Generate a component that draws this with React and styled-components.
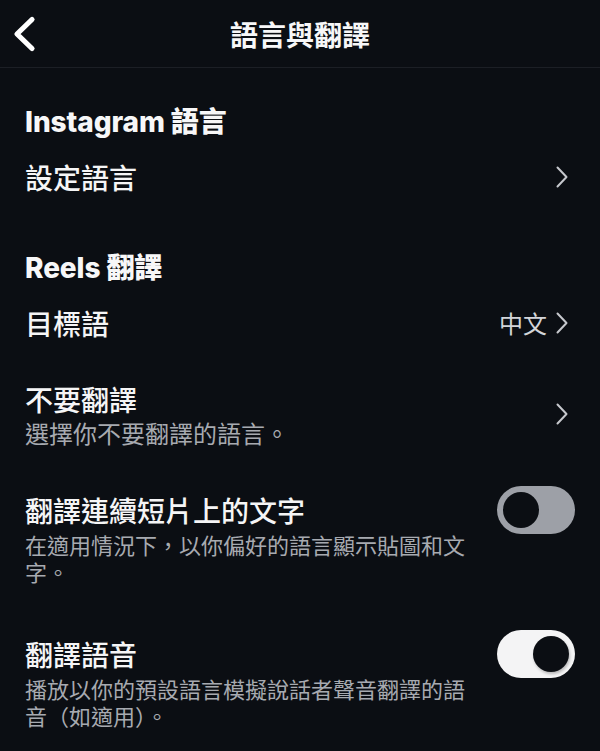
import React from "react";
import styled, { createGlobalStyle } from "styled-components";

const BG = "#0b0e13";

const Global = createGlobalStyle`
  html, body { margin: 0; padding: 0; background: ${BG}; }
  body { font-family: "Inter", "Noto Sans CJK TC", sans-serif; color: #f5f5f6; }
  * { box-sizing: border-box; }
`;

const Page = styled.div`
  width: 600px;
  min-height: 751px;
  background: ${BG};
  overflow: hidden;
`;

const Header = styled.header`
  height: 68px;
  display: grid;
  grid-template-columns: 1fr auto 1fr;
  align-items: center;
  border-bottom: 1px solid #1c1f25;
`;

const BackButton = styled.button`
  justify-self: start;
  background: none;
  border: none;
  padding: 0 0 0 10px;
  display: flex;
  align-items: center;
  cursor: pointer;
`;

const HeaderTitle = styled.h1`
  margin: 0;
  font-family: "Noto Sans CJK TC", sans-serif;
  font-size: 28px;
  font-weight: 700;
  line-height: 36px;
  color: #f7f7f8;
`;

const Content = styled.main`
  padding: 0 25px 0 25px;
  display: flex;
  flex-direction: column;
`;

const SectionTitle = styled.h2`
  margin: ${(p) => p.$mt}px 0 0 0;
  font-family: "Inter", "Noto Sans CJK TC", sans-serif;
  font-size: 28px;
  font-weight: 800;
  line-height: 36px;
  color: #f7f7f8;
  letter-spacing: -0.1px;
`;

const Row = styled.div`
  margin-top: ${(p) => p.$mt}px;
  display: flex;
  align-items: ${(p) => (p.$top ? "flex-start" : "center")};
  gap: 22px;
`;

const TextCol = styled.div`
  flex: 1;
  min-width: 0;
  display: flex;
  flex-direction: column;
`;

const RowTitle = styled.div`
  font-family: "Noto Sans CJK TC", sans-serif;
  font-size: 28px;
  font-weight: 500;
  line-height: 36px;
  color: #f5f5f6;
`;

const RowSub = styled.div`
  margin-top: ${(p) => (p.$large ? 2 : 3)}px;
  font-family: "Noto Sans CJK TC", sans-serif;
  font-size: ${(p) => (p.$large ? 24 : 22)}px;
  font-weight: 400;
  line-height: ${(p) => (p.$large ? 28 : 27)}px;
  color: #a7aab0;
  line-break: strict;
`;

const Trailing = styled.div`
  display: flex;
  align-items: center;
  gap: 8px;
  margin-right: 6px;
`;

const Value = styled.span`
  font-family: "Noto Sans CJK TC", sans-serif;
  font-size: 24px;
  font-weight: 400;
  line-height: 30px;
  color: #d3d5d9;
`;

const Track = styled.div`
  flex: none;
  width: 78px;
  height: 48px;
  margin-top: -6px;
  border-radius: 24px;
  background: ${(p) => (p.$on ? "#f4f4f5" : "#9da0a7")};
  padding: 6px;
  display: flex;
  justify-content: ${(p) => (p.$on ? "flex-end" : "flex-start")};
`;

const Knob = styled.div`
  width: 36px;
  height: 36px;
  border-radius: 50%;
  background: ${BG};
  box-shadow: ${(p) => (p.$on ? "1px 2px 3px rgba(0,0,0,0.25)" : "none")};
`;

const Chevron = () => (
  <svg width="14" height="22" viewBox="0 0 14 22" fill="none">
    <path
      d="M2.5 1.5 L11.5 11 L2.5 20.5"
      stroke="#c6c8cd"
      strokeWidth="2"
      strokeLinecap="round"
      strokeLinejoin="round"
    />
  </svg>
);

const BackIcon = () => (
  <svg width="28" height="38" viewBox="0 0 28 38" fill="none">
    <path
      d="M22 4.5 L7 19 L22 33.5"
      stroke="#ffffff"
      strokeWidth="5.2"
      strokeLinecap="round"
      strokeLinejoin="round"
    />
  </svg>
);

const Toggle = ({ on }) => (
  <Track $on={on}>
    <Knob $on={on} />
  </Track>
);

export default function App() {
  return (
    <Page>
      <Global />
      <Header>
        <BackButton aria-label="返回">
          <BackIcon />
        </BackButton>
        <HeaderTitle>語言與翻譯</HeaderTitle>
        <div />
      </Header>
      <Content>
        <SectionTitle $mt={36}>Instagram 語言</SectionTitle>
        <Row $mt={19}>
          <TextCol>
            <RowTitle>設定語言</RowTitle>
          </TextCol>
          <Trailing>
            <Chevron />
          </Trailing>
        </Row>

        <SectionTitle $mt={55}>Reels 翻譯</SectionTitle>
        <Row $mt={19}>
          <TextCol>
            <RowTitle>目標語</RowTitle>
          </TextCol>
          <Trailing>
            <Value>中文</Value>
            <Chevron />
          </Trailing>
        </Row>

        <Row $mt={40}>
          <TextCol>
            <RowTitle>不要翻譯</RowTitle>
            <RowSub $large>選擇你不要翻譯的語言。</RowSub>
          </TextCol>
          <Trailing>
            <Chevron />
          </Trailing>
        </Row>

        <Row $mt={45} $top>
          <TextCol>
            <RowTitle>翻譯連續短片上的文字</RowTitle>
            <RowSub>在適用情況下，以你偏好的語言顯示貼圖和文字。</RowSub>
          </TextCol>
          <Toggle on={false} />
        </Row>

        <Row $mt={51} $top>
          <TextCol>
            <RowTitle>翻譯語音</RowTitle>
            <RowSub>播放以你的預設語言模擬說話者聲音翻譯的語音（如適用）。</RowSub>
          </TextCol>
          <Toggle on />
        </Row>
      </Content>
    </Page>
  );
}
